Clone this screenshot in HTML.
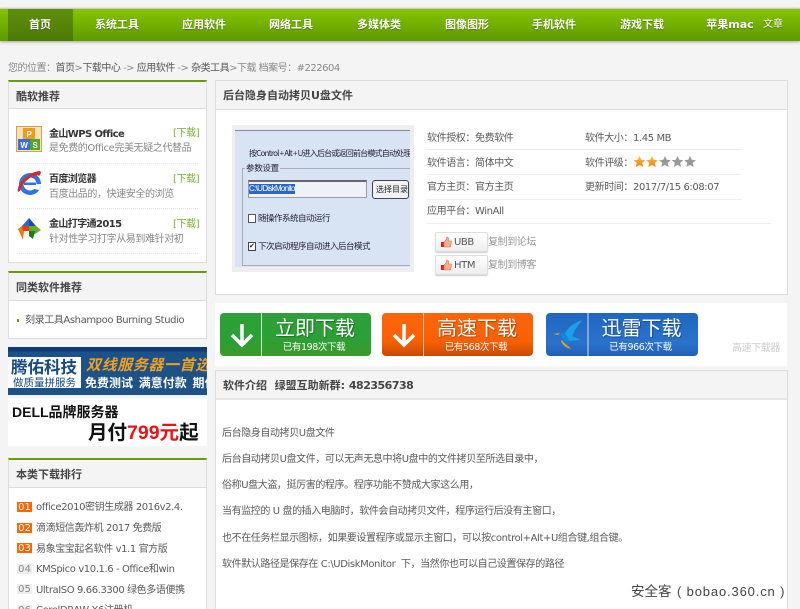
<!DOCTYPE html>
<html lang="zh"><head><meta charset="utf-8"><title>后台隐身自动拷贝U盘文件</title>
<style>
*{box-sizing:border-box;margin:0;padding:0}
html,body{width:800px;height:609px;overflow:hidden;background:#f4f4f4}
body{position:relative;font-family:"DejaVu Sans","Noto Sans CJK TC",sans-serif;font-size:10px;color:#5a5a5a;letter-spacing:-.4px}
.a{position:absolute;white-space:nowrap}
.t{position:absolute;white-space:nowrap;line-height:14px;padding-top:1px}
.h{font-size:11px;font-weight:bold;color:#444;letter-spacing:0}
.nav{position:absolute;left:0;top:8px;width:800px;height:33px;border-top:1px solid #c8d0c0;background:linear-gradient(#84c400,#5f9a00);box-shadow:0 1px 3px rgba(0,0,0,.35)}
.n{position:absolute;top:17px;line-height:16px;font-size:11px;letter-spacing:0;font-weight:bold;color:#fff;text-shadow:0 1px 1px rgba(50,80,0,.6);transform:translateX(-50%);white-space:nowrap}
.panel{position:absolute;background:#fff;border:1px solid #ddd}
.hd{position:absolute;background:#f4f4f4;border-bottom:1px solid #ddd;left:0;right:0;top:0}
.b{font-weight:bold;color:#333;letter-spacing:-.6px}
.line{position:absolute;height:1px;background:#eee}
.dash{position:absolute;left:17px;width:181px;border-top:1px dotted #e6e6e6;height:0}
.dl{position:absolute;color:#7ab030;line-height:14px;padding-top:1px}
.btn{position:absolute;top:313px;height:43px;border-radius:4px;color:#fff}
.btn .sep{position:absolute;left:41px;top:0;bottom:0;width:1px;background:rgba(255,255,255,.75)}
.btn .m{position:absolute;left:39px;right:0;top:2px;text-align:center;font-size:20px;line-height:26px;letter-spacing:0;text-shadow:1px 1px 1px rgba(0,0,0,.3)}
.btn .s{position:absolute;left:37px;right:0;top:27px;text-align:center;font-size:9.5px;line-height:13px;padding-top:1px}
.num{position:absolute;left:17px;width:15px;height:10px;font-size:10px;line-height:11px;letter-spacing:0;text-align:center;overflow:hidden}
.hot{background:#f60;color:#fff}.cold{background:#eee;color:#888}
.rk{position:absolute;left:36px;font-size:10px;line-height:14px;padding-top:1px;white-space:nowrap;color:#5a5a5a}
.sm{position:absolute;left:435px;width:53px;height:20px;border:1px solid #ddd;border-radius:2px;background:linear-gradient(#fff,#eee);box-shadow:0 1px 1px #ccc;color:#555;line-height:19px;padding-left:18px}
.sm svg{position:absolute;left:4px;top:3px}
.p{position:absolute;left:222px;font-size:10px;line-height:14px;padding-top:1px;white-space:nowrap;color:#5a5a5a}
.shot div{letter-spacing:-.5px}
</style></head><body>
<div class="nav"></div>
<div class="a" style="left:8px;top:9px;width:65px;height:32px;background:linear-gradient(#5f8f0c,#4b7a06)"></div>
<div class="n" style="left:40px">首页</div><div class="n" style="left:117px">系统工具</div><div class="n" style="left:204px">应用软件</div><div class="n" style="left:291px">网络工具</div><div class="n" style="left:379px">多媒体类</div><div class="n" style="left:467px">图像图形</div><div class="n" style="left:554px">手机软件</div><div class="n" style="left:642px">游戏下载</div><div class="n" style="left:730px">苹果mac</div><div class="n" style="left:773px;font-weight:normal;font-size:10px">文章</div>

<div class="t" style="left:8px;top:61px;color:#888;letter-spacing:-.5px">您的位置：<span style="color:#555">首页</span>&gt;<span style="color:#555">下载中心</span> -&gt; <span style="color:#555">应用软件</span> -&gt; <span style="color:#555">杂类工具</span>&gt;下载 档案号：#222604</div>

<!-- left 1 -->
<div class="panel" style="left:8px;top:80px;width:199px;height:183px;border-top:2px solid #6b9a10">
<div class="hd" style="height:27px"></div></div>
<div class="t h" style="left:16px;top:89px">酷软推荐</div>
<svg class="a" style="left:16px;top:126px" width="26" height="26" viewBox="0 0 26 26"><rect x=".5" y=".5" width="25" height="25" fill="#f6e3b8" stroke="#d6a050"/><rect x="7" y="2" width="12" height="11" fill="#f19a1f"/><rect x="2" y="13" width="12" height="11" fill="#3b6fd8"/><rect x="14" y="13" width="10" height="11" fill="#4fa82e"/><text x="13" y="11" font-size="8" font-weight="bold" fill="#fff" text-anchor="middle" font-family="Liberation Sans">P</text><text x="8" y="22" font-size="8" font-weight="bold" fill="#fff" text-anchor="middle" font-family="Liberation Sans">W</text><text x="19" y="22" font-size="8" font-weight="bold" fill="#fff" text-anchor="middle" font-family="Liberation Sans">S</text></svg>
<svg class="a" style="left:16px;top:170px" width="26" height="26" viewBox="0 0 26 26"><circle cx="14" cy="14" r="11" fill="#2f74d8"/><circle cx="14" cy="14" r="6.500" fill="#fff"/><rect x="8" y="12.500" width="12" height="2.500" fill="#2f74d8"/><path d="M20 14a6 6 0 0 1-2 5l5 1a11 11 0 0 0 2-6z" fill="#fff"/><path d="M2 22C0 16 10 3 23 1c3 0 2 3 0 5C20 3 8 9 4 21z" fill="#d8282c"/></svg>
<svg class="a" style="left:17px;top:217px" width="25" height="25" viewBox="0 0 25 25"><path d="M12 1 5 9h7z" fill="#2d68d0"/><path d="M12 1l7 8h-7z" fill="#1c49a8"/><path d="M1 12l4-3h7v5H7l-1 9z" fill="#f07a10"/><path d="M5 9h7v5H6z" fill="#e63a18"/><path d="M12 9h7l5 4-6 4h-6z" fill="#5eae2c"/><path d="M12 14h6l-2 8-4-3z" fill="#1f7a18"/></svg>
<div class="t b" style="left:49px;top:127px">金山WPS Office</div><div class="dl" style="left:173px;top:126px">[下载]</div>
<div class="t" style="left:49px;top:141px;color:#888">是免费的Office完美无疑之代替品</div>
<div class="dash" style="top:163px"></div>
<div class="t b" style="left:49px;top:172px">百度浏览器</div><div class="dl" style="left:173px;top:172px">[下载]</div>
<div class="t" style="left:49px;top:187px;color:#888">百度出品的，快速安全的浏览</div>
<div class="dash" style="top:208px"></div>
<div class="t b" style="left:49px;top:217px">金山打字通2015</div><div class="dl" style="left:173px;top:217px">[下载]</div>
<div class="t" style="left:49px;top:232px;color:#888">针对性学习打字从易到难针对初</div>
<div class="dash" style="top:253px"></div>

<!-- left 2 -->
<div class="panel" style="left:8px;top:271px;width:199px;height:68px;border-top:2px solid #6b9a10">
<div class="hd" style="height:28px"></div></div>
<div class="t h" style="left:16px;top:280px">同类软件推荐</div>
<div class="a" style="left:17px;top:319px;width:2px;height:3px;background:#6b9a10"></div>
<div class="t" style="left:25px;top:313px">刻录工具Ashampoo Burning Studio</div>

<!-- banner -->
<div class="a" style="left:8px;top:347px;width:199px;height:48px;background:linear-gradient(#0e3a78 0,#0e3a78 4px,#1d5288 5px,#1d5288);overflow:hidden;letter-spacing:0">
<div class="a" style="left:0;top:10px;width:73px;height:31px;background:#fff"></div>
<div class="a" style="left:3px;top:9px;font:bold 16.500px/20px 'Noto Sans CJK SC',sans-serif;color:#154a86">腾佑科技</div>
<div class="a" style="left:5px;top:29px;font:10.500px/13px 'Noto Sans CJK SC',sans-serif;color:#154a86">做质量拼服务</div>
<div class="a" style="left:78px;top:8px;font:italic bold 15px/20px 'Noto Sans CJK SC',sans-serif;color:#f0a020;letter-spacing:.6px">双线服务器一首选</div>
<div class="a" style="left:77px;top:28px;font:bold 12px/15px 'Noto Sans CJK SC',sans-serif;color:#fff;word-spacing:3px">免费测试 满意付款 期付</div>
</div>
<div class="a" style="left:8px;top:398px;width:199px;height:48px;background:#fff;overflow:hidden;color:#111;font-family:'Liberation Sans','Noto Sans CJK SC',sans-serif;font-weight:bold;letter-spacing:0">
<div class="a" style="left:4px;top:4px;font-size:14px;line-height:20px">DELL品牌服务器</div>
<div class="a" style="left:80px;top:23px;font-size:19.500px;line-height:25px">月付<span style="color:#f01010">799元</span>起</div>
</div>

<!-- left 3 -->
<div class="panel" style="left:8px;top:458px;width:199px;height:160px;border-top:2px solid #6b9a10">
<div class="hd" style="height:28px"></div></div>
<div class="t h" style="left:16px;top:467px">本类下载排行</div>
<div class="num hot" style="top:502px">01</div><div class="rk" style="top:500px">office2010密钥生成器 2016v2.4.</div>
<div class="num hot" style="top:523px">02</div><div class="rk" style="top:521px">滴滴短信轰炸机 2017 免费版</div>
<div class="num hot" style="top:543px">03</div><div class="rk" style="top:542px">易象宝宝起名软件 v1.1 官方版</div>
<div class="num cold" style="top:564px">04</div><div class="rk" style="top:562px">KMSpico v10.1.6 - Office和win</div>
<div class="num cold" style="top:584px">05</div><div class="rk" style="top:583px">UltraISO 9.66.3300 绿色多语便携</div>
<div class="num cold" style="top:605px">06</div><div class="rk" style="top:603px">CorelDRAW X6注册机</div>

<!-- main info -->
<div class="panel" style="left:215px;top:80px;width:573px;height:215px">
<div class="hd" style="height:29px"></div></div>
<div class="t h" style="left:223px;top:88px">后台隐身自动拷贝U盘文件</div>

<!-- screenshot -->
<div class="a" style="left:232px;top:125px;width:182px;height:147px;background:#eee"></div>
<div class="a shot" style="left:235px;top:130px;width:175px;height:137px;background:#d8e4f4;border-top:1px solid #889;overflow:hidden;font-family:'Noto Sans CJK SC',sans-serif;color:#223;font-size:8.500px">
<div class="a" style="left:14px;top:16px;line-height:13px;font-size:8px;letter-spacing:-.8px">按Control + Alt + U进入后台或返回前台模式自动处理拷</div>
<div class="a" style="left:7px;top:37px;width:180px;height:98px;border:1px solid #aab;"></div>
<div class="a" style="left:10px;top:31px;background:#d8e4f4;line-height:13px;padding:0 1px;letter-spacing:-.3px">参数设置</div>
<div class="a" style="left:13px;top:49px;width:119px;height:18px;background:#eef2f8;border:1px solid #99a;border-top:2px solid #667"></div>
<div class="a" style="left:14px;top:53px;width:46px;height:10px;background:#2a66c8;color:#fff;line-height:10px;font-size:8px;letter-spacing:-.7px;font-family:'Liberation Sans'">C:\UDiskMonitor</div>
<div class="a" style="left:137px;top:49px;width:37px;height:19px;background:#f2f2f2;border:1px solid #445;border-radius:3px;line-height:17px;padding-left:3px;font-size:8px;overflow:hidden;letter-spacing:0">选择目录</div>
<div class="a" style="left:13px;top:83px;width:8px;height:9px;border:1.500px solid #555;background:#fff"></div>
<div class="a" style="left:23px;top:81px;line-height:13px">随操作系统自动运行</div>
<div class="a" style="left:13px;top:111px;width:8px;height:9px;border:1px solid #444;background:#fff;font-size:7px;line-height:7px">✔</div>
<div class="a" style="left:23px;top:109px;line-height:13px">下次启动程序自动进入后台模式</div>
</div>

<!-- info rows -->
<div class="t" style="left:427px;top:131px">软件授权：免费软件</div><div class="t" style="left:585px;top:131px">软件大小：1.45 MB</div>
<div class="line" style="left:427px;top:149px;width:315px"></div>
<div class="t" style="left:427px;top:156px">软件语言：简体中文</div><div class="t" style="left:585px;top:156px">软件评级：</div>
<svg class="a" style="left:633px;top:155px" width="64" height="14" viewBox="0 0 64 14"><defs><linearGradient id="o" x1="0" y1="0" x2="0" y2="1"><stop offset="0" stop-color="#ffc040"/><stop offset="1" stop-color="#f08000"/></linearGradient></defs>
<path d="M6.500 1l1.700 3.800 4.100.4-3.100 2.700.9 4.100-3.600-2.100-3.600 2.100.9-4.100L.7 5.200l4.100-.4z" fill="url(#o)"/>
<path transform="translate(12.500)" d="M6.500 1l1.700 3.800 4.100.4-3.100 2.700.9 4.100-3.600-2.100-3.600 2.100.9-4.100L.7 5.200l4.100-.4z" fill="url(#o)"/>
<path transform="translate(25.500)" d="M6.500 1l1.700 3.800 4.100.4-3.100 2.700.9 4.100-3.600-2.100-3.600 2.100.9-4.100L.7 5.200l4.100-.4z" fill="#999"/>
<path transform="translate(38)" d="M6.500 1l1.700 3.800 4.100.4-3.100 2.700.9 4.100-3.600-2.100-3.600 2.100.9-4.100L.7 5.200l4.100-.4z" fill="#999"/>
<path transform="translate(50.500)" d="M6.500 1l1.700 3.800 4.100.4-3.100 2.700.9 4.100-3.600-2.100-3.600 2.100.9-4.100L.7 5.200l4.100-.4z" fill="#999"/></svg>
<div class="line" style="left:427px;top:174px;width:315px"></div>
<div class="t" style="left:427px;top:180px">官方主页：官方主页</div><div class="t" style="left:585px;top:180px">更新时间：2017/7/15 6:08:07</div>
<div class="line" style="left:427px;top:199px;width:315px"></div>
<div class="t" style="left:427px;top:204px">应用平台：WinAll</div>
<div class="line" style="left:427px;top:223px;width:344px"></div>
<div class="sm" style="top:232px"><svg width="12" height="12" viewBox="0 0 12 12"><rect x="1" y="6" width="3" height="5" fill="#f01818"/><path d="M4 6l2-2 1-3 1.500 1v3h3l-1 6H4z" fill="#f4b090" stroke="#d87050" stroke-width=".6"/></svg>UBB</div>
<div class="t" style="left:488px;top:235px;color:#999">复制到论坛</div>
<div class="sm" style="top:255px"><svg width="12" height="12" viewBox="0 0 12 12"><rect x="1" y="6" width="3" height="5" fill="#f01818"/><path d="M4 6l2-2 1-3 1.500 1v3h3l-1 6H4z" fill="#f4b090" stroke="#d87050" stroke-width=".6"/></svg>HTM</div>
<div class="t" style="left:488px;top:258px;color:#999">复制到博客</div>

<!-- download -->
<div class="a" style="left:215px;top:303px;width:572px;height:63px;background:#fff"></div>
<div class="btn" style="left:220px;width:151px;background:linear-gradient(#2f9f3a,#2aa035 60%,#3c9a28)"><div class="sep"></div>
<svg class="a" style="left:10px;top:9px" width="24" height="26" viewBox="0 0 24 26"><path d="M12 2v21M2 13l10 10 10-10" fill="none" stroke="#fff" stroke-width="3.500"/></svg>
<div class="m">立即下载</div><div class="s">已有198次下载</div></div>
<div class="btn" style="left:382px;width:151px;background:linear-gradient(#ff6408,#fb6004 65%,#c84a00)"><div class="sep"></div>
<svg class="a" style="left:10px;top:9px" width="24" height="26" viewBox="0 0 24 26"><path d="M12 2v21M2 13l10 10 10-10" fill="none" stroke="#fff" stroke-width="3.500"/></svg>
<div class="m">高速下载</div><div class="s">已有568次下载</div></div>
<div class="btn" style="left:546px;width:152px;background:linear-gradient(#1f66c0,#2a72cc 70%,#2060b8)"><div class="sep" style="width:2px;background:rgba(255,255,255,.4)"></div>
<svg class="a" style="left:5px;top:6px" width="32" height="32" viewBox="0 0 32 32"><path d="M31 1C22 4 17 9 14 14l4 8 12-1-9-4 3-6z" fill="#18a0ea"/><path d="M10 15c3-2 6 0 8 7l-3 1c-3-2-5-4-5-8z" fill="#0e8ad8"/><path d="M2 15l7-1-2 2z" fill="#e8a020"/><path d="M11 21c2 4 6 5 9 9-4-1-8-3-10-8z" fill="#e8a020"/></svg>
<div class="m">迅雷下载</div><div class="s">已有966次下载</div></div>
<div class="t" style="left:732px;top:341px;color:#ccc">高速下载器</div>

<!-- intro -->
<div class="panel" style="left:215px;top:370px;width:573px;height:250px">
<div class="hd" style="height:29px;border-bottom:2px solid #e6e6e6"></div></div>
<div class="t h" style="left:223px;top:378px">软件介绍&nbsp; 绿盟互助新群: <span style="letter-spacing:-.5px">482356738</span></div>
<div class="p" style="top:426px">后台隐身自动拷贝U盘文件</div>
<div class="p" style="top:452px">后台自动拷贝U盘文件，可以无声无息中将U盘中的文件拷贝至所选目录中，</div>
<div class="p" style="top:478px">俗称U盘大盗，挺厉害的程序。程序功能不赞成大家这么用，</div>
<div class="p" style="top:504px">当有监控的 U 盘的插入电脑时，软件会自动拷贝文件，程序运行后没有主窗口，</div>
<div class="p" style="top:531px">也不在任务栏显示图标，如果要设置程序或显示主窗口，可以按control+Alt+U组合键,组合键。</div>
<div class="p" style="top:557px">软件默认路径是保存在 C:\UDiskMonitor&nbsp; 下，当然你也可以自己设置保存的路径</div>
<div class="a" style="left:631px;top:583px;font-size:13.500px;line-height:17px;color:#444;font-family:'Liberation Sans','Noto Sans CJK SC',sans-serif;letter-spacing:0">安全客</div>
<div class="a" style="left:677px;top:583px;font-size:13px;line-height:17px;color:#444;font-family:'Liberation Sans',sans-serif;letter-spacing:.85px">( bobao.360.cn )</div>
</body></html>
